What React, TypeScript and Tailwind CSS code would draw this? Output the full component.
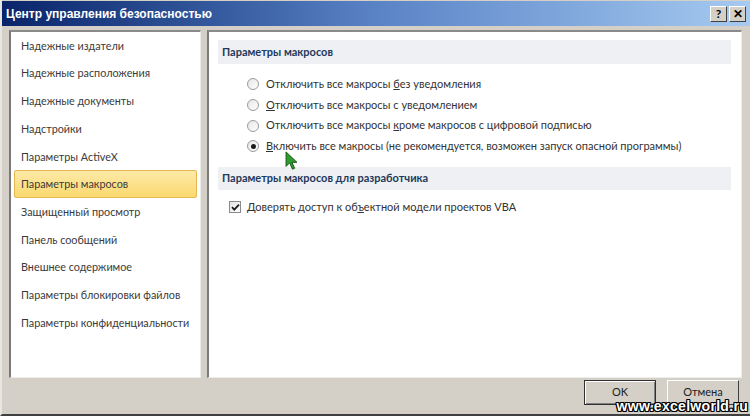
import React from "react";

const leftItems = [
  "Надежные издатели",
  "Надежные расположения",
  "Надежные документы",
  "Надстройки",
  "Параметры ActiveX",
  "Параметры макросов",
  "Защищенный просмотр",
  "Панель сообщений",
  "Внешнее содержимое",
  "Параметры блокировки файлов",
  "Параметры конфиденциальности",
];

function Radio({ checked }: { checked?: boolean }) {
  return (
    <span className="w-[12px] h-[12px] rounded-full border border-[#9a9a9a] bg-gradient-to-br from-[#e6e6e6] to-white flex items-center justify-center shrink-0">
      {checked && <span className="w-[5px] h-[5px] rounded-full bg-[#1a1a1a]" />}
    </span>
  );
}

function TitleBtn({ children }: { children: React.ReactNode }) {
  return (
    <div className="w-[17px] h-[16px] bg-[#d4d0c8] border border-t-white border-l-white border-r-[#404040] border-b-[#404040] flex items-center justify-center text-[12px] font-bold text-black leading-none">
      {children}
    </div>
  );
}

export default function App() {
  return (
    <div
      className="w-[750px] h-[416px] bg-[#d4d0c8] flex flex-col relative overflow-hidden border-l-2 border-l-[#e8e6e0] border-b-2 border-b-[#404040]"
      style={{ fontFamily: 'Lato, "Noto Sans", sans-serif' }}
    >
      {/* Title bar */}
      <div className="h-[25px] shrink-0 bg-gradient-to-r from-[#0a246a] via-[#5a83c6] to-[#a6caf0] flex items-center pl-[4px] pr-[4px] mt-[1px]">
        <span
          className="text-white font-bold text-[12px]"
          style={{ fontFamily: '"Liberation Sans", sans-serif' }}
        >
          Центр управления безопасностью
        </span>
        <div className="ml-auto flex gap-[2px] mt-[1px]">
          <TitleBtn>?</TitleBtn>
          <TitleBtn>✕</TitleBtn>
        </div>
      </div>

      {/* Main */}
      <div className="flex gap-[6px] pl-[7px] pr-[8px] pt-[4px] h-[352px] shrink-0">
        {/* Left */}
        <div className="w-[192px] bg-white border-l-2 border-t-2 border-l-[#7a7a7a] border-t-[#8a8a8a] border-r border-b border-r-[#ededea] border-b-[#ededea] px-[3px]">
          {leftItems.map((t, i) => {
            const sel = i === 5;
            return (
              <div
                key={t}
                className={
                  "h-[27.7px] flex items-center pl-[6px] text-[10.8px] text-[#3a3a3a] whitespace-nowrap " +
                  (sel
                    ? "bg-gradient-to-b from-[#fde9a6] to-[#fbd96e] border border-[#e2b650] rounded-[2px]"
                    : "border border-transparent")
                }
              >
                {t}
              </div>
            );
          })}
        </div>

        {/* Right */}
        <div className="flex-1 bg-white border-l-2 border-t-2 border-l-[#7a7a7a] border-t-[#8a8a8a] border-r border-b border-r-[#ededea] border-b-[#ededea] pl-[9px] pr-[10px] pt-[8px] flex flex-col">
          <div className="h-[24px] bg-[#eef0f3] flex items-center pl-[4px] text-[11px] font-bold text-[#1e395b]">
            Параметры макросов
          </div>
          <div className="flex flex-col pl-[29px] pt-[10px] text-[11px] text-[#333] whitespace-nowrap">
            <div className="h-[20.7px] flex items-center gap-[7px]">
              <Radio />
              <span>Отключить все макросы <u>б</u>ез уведомления</span>
            </div>
            <div className="h-[20.7px] flex items-center gap-[7px]">
              <Radio />
              <span><u>О</u>тключить все макросы с уведомлением</span>
            </div>
            <div className="h-[20.7px] flex items-center gap-[7px]">
              <Radio />
              <span>Отключить все макросы <u>к</u>роме макросов с цифровой подписью</span>
            </div>
            <div className="h-[20.7px] flex items-center gap-[7px]">
              <Radio checked />
              <span><u>В</u>ключить все макросы (не рекомендуется, возможен запуск опасной программы)</span>
            </div>
          </div>
          <div className="h-[23px] mt-[10px] bg-[#eef0f3] flex items-center pl-[4px] text-[11px] font-bold text-[#1e395b]">
            Параметры макросов для разработчика
          </div>
          <div className="flex items-center gap-[6px] pl-[11px] pt-[9px] text-[11px] text-[#333] whitespace-nowrap">
            <span className="w-[12px] h-[12px] border border-[#8a8a8a] bg-gradient-to-br from-[#e3e3e3] to-white flex items-center justify-center shrink-0">
              <svg width="9" height="9" viewBox="0 0 9 9">
                <path d="M1 4.2 L3.3 6.6 L8 1.6" fill="none" stroke="#1a1a1a" strokeWidth="1.8" />
              </svg>
            </span>
            <span>Доверять доступ к об<u>ъ</u>ектной модели проектов VBA</span>
          </div>
        </div>
      </div>

      {/* Bottom buttons */}
      <div className="flex justify-end gap-[11px] pr-[11px] pt-[2px]">
        <button className="w-[72px] h-[25px] bg-[#d4d0c8] border border-[#303030] shadow-[inset_1px_1px_0_#fff,inset_-1px_-1px_0_#808080] text-[11px] text-[#222]">
          OK
        </button>
        <button className="w-[72px] h-[25px] bg-[#d4d0c8] border border-t-white border-l-white border-r-[#404040] border-b-[#404040] text-[11px] text-[#222]">
          Отмена
        </button>
      </div>

      {/* Cursor */}
      <svg className="absolute left-[283px] top-[151px]" width="13" height="20" viewBox="0 0 14 22">
        <path d="M1 1 L1 17 L5 13 L8 20 L10.5 19 L7.5 12.5 L13 12.5 Z" fill="#2e9b2e" stroke="#0f4f0f" strokeWidth="1" />
      </svg>

      {/* Watermark */}
      <div
        className="absolute right-[2px] bottom-[-3px] text-white font-bold text-[14px] tracking-[0.3px]"
        style={{
          fontFamily: '"Liberation Sans", sans-serif',
          textShadow:
            "1px 0 0 #000, -1px 0 0 #000, 0 1px 0 #000, 0 -1px 0 #000, 1px 1px 0 #000, -1px -1px 0 #000, 1px -1px 0 #000, -1px 1px 0 #000",
        }}
      >
        www.excelworld.ru
      </div>
    </div>
  );
}
